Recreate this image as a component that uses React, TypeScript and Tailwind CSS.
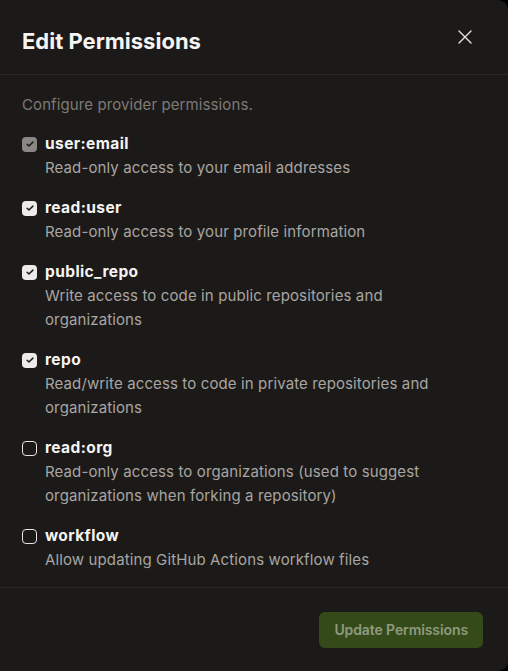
import React from "react";

const items = [
  { name: "user:email", desc: "Read-only access to your email addresses", state: "disabled" },
  { name: "read:user", desc: "Read-only access to your profile information", state: "checked" },
  { name: "public_repo", desc: "Write access to code in public repositories and organizations", state: "checked" },
  { name: "repo", desc: "Read/write access to code in private repositories and organizations", state: "checked" },
  { name: "read:org", desc: "Read-only access to organizations (used to suggest organizations when forking a repository)", state: "unchecked" },
  { name: "workflow", desc: "Allow updating GitHub Actions workflow files", state: "unchecked" },
];

function Box({ state }: { state: string }) {
  if (state === "unchecked") {
    return <div className="w-[15px] h-[15px] rounded-[4px] border-[1.5px] border-[#e7e5e4] shrink-0" />;
  }
  const bg = state === "disabled" ? "bg-[#8a8785]" : "bg-[#ecebea]";
  return (
    <div className={`w-[15px] h-[15px] rounded-[4px] ${bg} flex items-center justify-center shrink-0`}>
      <svg width="10" height="10" viewBox="0 0 24 24" fill="none" stroke="#1c1a18" strokeWidth="3.5" strokeLinecap="round" strokeLinejoin="round">
        <path d="M5 12.5l4.5 4.5L19 7.5" />
      </svg>
    </div>
  );
}

export default function App() {
  return (
    <div className="w-[508px] h-[671px] bg-black" style={{ fontFamily: "Inter, 'Noto Sans', sans-serif" }}>
      <div className="w-full h-full bg-[#1c1a18] rounded-r-[10px] flex flex-col">
        <div className="h-[75px] flex items-center justify-between pl-[22px] pr-[34px] border-b border-[#2a2826] shrink-0">
          <h1 className="text-[22px] leading-[28px] mt-[8px] font-bold text-[#f5f4f3] tracking-[0px]">Edit Permissions</h1>
          <svg width="18" height="18" viewBox="0 0 24 24" fill="none" stroke="#e7e5e4" strokeWidth="1.8" strokeLinecap="round">
            <path d="M4 4l16 16M20 4L4 20" />
          </svg>
        </div>
        <div className="px-[22px] pt-[18px] flex-1">
          <p className="text-[15px] leading-[24px] text-[#7d7a77] mb-[15px] tracking-[0.1px]">Configure provider permissions.</p>
          <div className="flex flex-col gap-[16px]">
            {items.map((it) => (
              <div key={it.name} className="flex gap-[8px]">
                <div className="h-[24px] flex items-center">
                  <Box state={it.state} />
                </div>
                <div className="flex flex-col">
                  <span className="text-[15.5px] leading-[24px] font-bold text-[#f5f4f3] tracking-[0.4px]">{it.name}</span>
                  <span className="text-[15px] leading-[24px] text-[#a8a5a2] max-w-[405px] tracking-[0.12px]">{it.desc}</span>
                </div>
              </div>
            ))}
          </div>
        </div>
        <div className="border-t border-[#2a2826] h-[84px] flex items-center justify-end pr-[25px] shrink-0">
          <button className="h-[36px] px-[15px] rounded-[6px] bg-[#344a18] text-[14px] font-semibold text-[#8e9a80] tracking-[-0.1px]">Update Permissions</button>
        </div>
      </div>
    </div>
  );
}
